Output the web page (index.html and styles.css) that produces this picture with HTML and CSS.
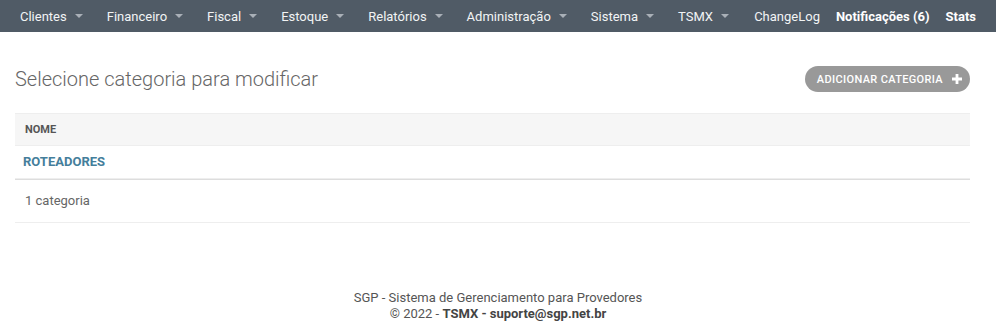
FILE: index.html
```html
<!DOCTYPE html>
<html lang="pt-br">
<head>
<meta charset="utf-8">
<title>Selecione categoria para modificar</title>
<link rel="stylesheet" href="styles.css">
</head>
<body>
<nav class="topnav">
  <ul class="menu menu-left">
    <li class="menu-item">Clientes<span class="caret"></span></li>
    <li class="menu-item">Financeiro<span class="caret"></span></li>
    <li class="menu-item">Fiscal<span class="caret"></span></li>
    <li class="menu-item">Estoque<span class="caret"></span></li>
    <li class="menu-item">Relatórios<span class="caret"></span></li>
    <li class="menu-item">Administração<span class="caret"></span></li>
    <li class="menu-item">Sistema<span class="caret"></span></li>
    <li class="menu-item">TSMX<span class="caret"></span></li>
  </ul>
  <ul class="menu menu-right">
    <li class="menu-link">ChangeLog</li>
    <li class="menu-link strong">Notificações (6)</li>
    <li class="menu-link strong">Stats</li>
  </ul>
</nav>

<main class="content">
  <div class="content-head">
    <h1 class="page-title">Selecione categoria para modificar</h1>
    <a class="addlink" href="#">Adicionar categoria
      <svg class="plus" width="10" height="10" viewBox="0 0 10 10" aria-hidden="true"><path d="M3.6 0h2.8v3.6H10v2.8H6.4V10H3.6V6.4H0V3.6h3.6z" fill="#fff"/></svg>
    </a>
  </div>

  <table class="results">
    <thead>
      <tr><th><span class="th-text">Nome</span></th></tr>
    </thead>
    <tbody>
      <tr><td><a class="row-link" href="#">Roteadores</a></td></tr>
    </tbody>
  </table>
  <p class="paginator">1 categoria</p>
</main>

<footer class="footer">
  <div>SGP - Sistema de Gerenciamento para Provedores</div>
  <div>© 2022 - <b>TSMX - suporte@sgp.net.br</b></div>
</footer>
</body>
</html>
```

FILE: styles.css
```css
* { box-sizing: border-box; }

body {
  margin: 0;
  font-family: Roboto, "Liberation Sans", Arial, sans-serif;
  font-size: 13px;
  color: #333;
  background: #fff;
}

.topnav {
  display: flex;
  align-items: center;
  height: 32px;
  background: #505b66;
  padding: 0 12px 0 8px;
  white-space: nowrap;
}

.menu {
  list-style: none;
  margin: 0;
  padding: 0;
  display: flex;
  align-items: center;
  height: 100%;
  flex-shrink: 0;
}

.menu-right { margin-left: auto; }

.menu-item {
  display: flex;
  align-items: center;
  padding: 0 12px;
  color: #f2f4f5;
  font-size: 13px;
}

.caret {
  width: 0;
  height: 0;
  margin-left: 8px;
  border-left: 4px solid transparent;
  border-right: 4px solid transparent;
  border-top: 4px solid #a9b0b7;
}

.menu-link {
  padding: 0 8px;
  color: #f2f4f5;
  font-size: 13px;
  white-space: nowrap;
}

.menu-link.strong {
  font-weight: 700;
  color: #fff;
}

.content {
  padding: 34px 26px 0 15px;
}

.content-head {
  display: flex;
  align-items: center;
  justify-content: space-between;
  margin-bottom: 21px;
}

.page-title {
  margin: 0;
  font-size: 20px;
  line-height: 26px;
  font-weight: 300;
  color: #666;
}

.addlink {
  display: flex;
  align-items: center;
  gap: 9px;
  height: 26px;
  padding: 0 8px 0 12px;
  border-radius: 13px;
  background: #999;
  color: #fff;
  text-decoration: none;
  font-size: 11px;
  font-weight: 500;
  letter-spacing: 0.35px;
  text-transform: uppercase;
}

.plus { display: block; }

.results {
  width: 100%;
  border-collapse: collapse;
}

.results th {
  padding: 0;
  text-align: left;
  background: #f6f6f6;
  border-top: 1px solid #eee;
  border-bottom: 1px solid #eee;
}

.th-text {
  display: block;
  padding: 8px 10px;
  font-size: 11px;
  line-height: 15px;
  font-weight: 700;
  color: #555;
  text-transform: uppercase;
}

.results td {
  padding: 8px;
  line-height: 16px;
  border-bottom: 1px solid #eee;
}

.row-link {
  color: #447e9b;
  font-weight: 700;
  font-size: 13px;
  text-transform: uppercase;
  text-decoration: none;
}

.paginator {
  margin: 0;
  padding: 10px 10px;
  line-height: 22px;
  font-size: 13px;
  color: #666;
  border-top: 1px solid #ddd;
  border-bottom: 1px solid #eee;
}

.footer {
  margin-top: 67px;
  text-align: center;
  font-size: 13px;
  line-height: 16px;
  color: #555;
}

.footer b { font-weight: 700; color: #444; }
```
